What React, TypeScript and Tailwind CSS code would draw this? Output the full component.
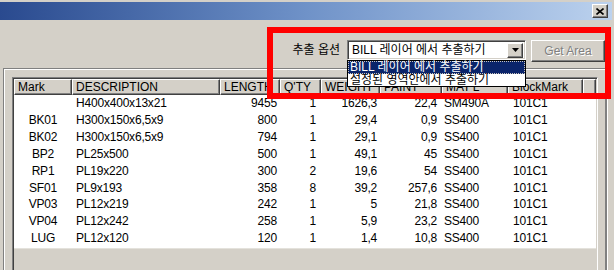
import React from "react";

type Col = { label: string; w: string; cell: string };

const cols: Col[] = [
  { label: "Mark", w: "w-[58px]", cell: "justify-center" },
  { label: "DESCRIPTION", w: "w-[148px]", cell: "justify-start pl-[4px]" },
  { label: "LENGTH", w: "w-[60px]", cell: "justify-end pr-[3px]" },
  { label: "Q'TY", w: "w-[41px]", cell: "justify-end pr-[5px]" },
  { label: "WEIGHT", w: "w-[59px]", cell: "justify-end pr-[3px]" },
  { label: "PAINT", w: "w-[62px]", cell: "justify-end pr-[5px]" },
  { label: "MAT'L", w: "w-[66px]", cell: "justify-start pl-[2px]" },
  { label: "BlockMark", w: "w-[75px]", cell: "justify-start pl-[5px]" },
];

const rows: string[][] = [
  ["", "H400x400x13x21", "9455", "1", "1626,3", "22,4", "SM490A", "101C1"],
  ["BK01", "H300x150x6,5x9", "800", "1", "29,4", "0,9", "SS400", "101C1"],
  ["BK02", "H300x150x6,5x9", "794", "1", "29,1", "0,9", "SS400", "101C1"],
  ["BP2", "PL25x500", "500", "1", "49,1", "45", "SS400", "101C1"],
  ["RP1", "PL19x220", "300", "2", "19,6", "54", "SS400", "101C1"],
  ["SF01", "PL9x193", "358", "8", "39,2", "257,6", "SS400", "101C1"],
  ["VP03", "PL12x219", "242", "1", "5", "21,8", "SS400", "101C1"],
  ["VP04", "PL12x242", "258", "1", "5,9", "23,2", "SS400", "101C1"],
  ["LUG", "PL12x120", "120", "1", "1,4", "10,8", "SS400", "101C1"],
];

const hdr =
  "h-[16px] flex items-center pl-[3px] border-t border-l border-r border-b border-t-white border-l-white border-r-[#404040] border-b-[#404040] shadow-[inset_-1px_-1px_0_#808080] whitespace-nowrap overflow-hidden";

export default function App() {
  return (
    <div
      className="relative w-[614px] h-[270px] overflow-hidden bg-[#d4d0c8] text-[12px] text-black leading-none"
      style={{ fontFamily: '"Liberation Sans", "Noto Sans CJK KR", sans-serif' }}
    >
      {/* title bar */}
      <div className="mt-[2px] mr-[2px] h-[18px] bg-linear-to-r from-[#2a4a8f] via-[#6f92c8] to-[#bcd2ee] flex items-center justify-end pr-[4px]">
        <div className="w-[16px] h-[14px] bg-[#d4d0c8] border-t border-l border-t-white border-l-white border-r border-b border-r-[#404040] border-b-[#404040] shadow-[inset_-1px_-1px_0_#808080] flex items-center justify-center">
          <svg width="8" height="7" viewBox="0 0 8 7">
            <path d="M0.5 0.5 L7.5 6.5 M7.5 0.5 L0.5 6.5" stroke="#000" strokeWidth="1.6" />
          </svg>
        </div>
      </div>

      {/* option row */}
      <div className="h-[48px] flex items-start justify-end pr-[9px] pt-[20px]">
        <div className="h-[20px] flex items-center mr-[7px] text-[12px]">추출 옵션</div>
        <div className="w-[179px] h-[20px] bg-white border-t border-l border-t-[#808080] border-l-[#808080] border-r border-b border-r-white border-b-white shadow-[inset_1px_1px_0_#404040,inset_-1px_-1px_0_#d4d0c8] flex items-center pl-[4px] pr-[2px]">
          <span className="flex-1 whitespace-nowrap">BILL 레이어 에서 추출하기</span>
          <div className="w-[16px] h-[15px] bg-[#d4d0c8] border-t border-l border-t-white border-l-white border-r border-b border-r-[#404040] border-b-[#404040] shadow-[inset_-1px_-1px_0_#808080] flex items-center justify-center">
            <svg width="7" height="4" viewBox="0 0 7 4">
              <path d="M0 0 H7 L3.5 4 Z" fill="#000" />
            </svg>
          </div>
        </div>
        <div className="ml-[5px] w-[74px] h-[22px] bg-[#d4d0c8] border-t border-l border-t-white border-l-white border-r border-b border-r-[#404040] border-b-[#404040] shadow-[inset_-1px_-1px_0_#808080] flex items-center justify-center text-[#808080] [text-shadow:1px_1px_0_#ffffff]">
          Get Area
        </div>
      </div>

      {/* frame */}
      <div className="ml-[3px] w-[605px] h-[210px] border-t border-l border-t-[#808080] border-l-[#808080] border-r border-r-white shadow-[inset_1px_1px_0_#ffffff,inset_-2px_0_0_#808080] pt-[8px] pl-[8px]">
        <div className="w-[586px] h-[200px] border-t border-l border-t-[#808080] border-l-[#808080] border-r border-r-white shadow-[inset_1px_1px_0_#404040,inset_-1px_0_0_#d4d0c8] flex flex-col pt-[1px] pl-[1px] pr-[1px]">
          {/* header */}
          <div className="flex h-[16px] bg-[#d4d0c8]">
            {cols.map((c) => (
              <div key={c.label} className={`${c.w} ${hdr}`}>
                {c.label}
              </div>
            ))}
            <div className={`w-[13px] ${hdr}`}></div>
          </div>
          {/* rows */}
          <div className="h-[153px] bg-white">
            {rows.map((r, i) => (
              <div key={i} className="flex h-[16.85px]">
                {r.map((v, j) => (
                  <div
                    key={j}
                    className={`${cols[j].w} ${cols[j].cell} flex items-center whitespace-nowrap tracking-[-0.2px]`}
                  >
                    {v}
                  </div>
                ))}
              </div>
            ))}
          </div>
          <div className="flex-1 bg-[#d4d0c8] border-t border-t-[#e4e2dc]"></div>
        </div>
      </div>

      {/* open dropdown list */}
      <div className="absolute left-[347px] top-[60px] w-[179px] h-[27px] bg-white border border-black flex flex-col p-[0px]">
        <div className="h-[12.5px] bg-[#0a246a] text-white border border-dotted border-[#c8c4bc] flex items-center pl-[1px] whitespace-nowrap">
          BILL 레이어 에서 추출하기
        </div>
        <div className="h-[12.5px] flex items-center pl-[2px] whitespace-nowrap">
          설정된 영역안에서 추출하기
        </div>
      </div>

      {/* red annotation */}
      <div className="absolute left-[267px] top-[27px] w-[344px] h-[72px] border-[6px] border-[#ff0000] pointer-events-none"></div>
    </div>
  );
}
